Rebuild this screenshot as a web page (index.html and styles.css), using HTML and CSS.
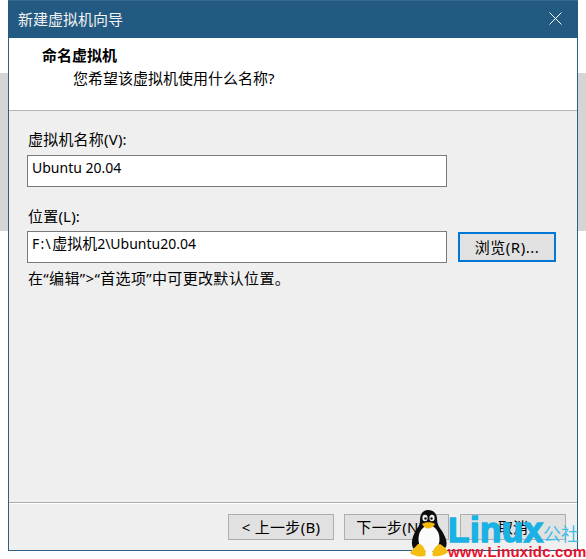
FILE: index.html
```html
<!DOCTYPE html>
<html lang="zh-CN">
<head>
<meta charset="utf-8">
<title>新建虚拟机向导</title>
<link rel="stylesheet" href="styles.css">
</head>
<body>
<div class="window">
  <div class="titlebar">
    <span class="title">新建虚拟机向导</span>
    <svg class="close" width="13" height="13" viewBox="0 0 13 13"><path d="M0.5 0.5L12.5 12.5M12.5 0.5L0.5 12.5" stroke="#fff" stroke-width="1" fill="none"/></svg>
  </div>
  <div class="header">
    <div class="heading">命名虚拟机</div>
    <div class="subheading">您希望该虚拟机使用什么名称?</div>
  </div>
  <div class="content">
    <label class="label">虚拟机名称(V):</label>
    <div class="input name-input"><span class="lat">Ubuntu 20.04</span></div>
    <label class="label loc-label">位置(L):</label>
    <div class="loc-row">
      <div class="input"><span class="lat drive">F:\</span>虚拟机<span class="lat">2\Ubuntu20.04</span></div>
      <button class="btn browse">浏览(R)...</button>
    </div>
    <p class="hint">在“编辑”&gt;“首选项”中可更改默认位置。</p>
  </div>
  <div class="footer">
    <button class="btn back">&lt; 上一步(B)</button>
    <button class="btn next">下一步(N) &gt;</button>
    <button class="btn cancel">取消</button>
  </div>
</div>
<div class="watermark">
  <svg class="tux" width="40" height="47" viewBox="0 0 40 47">
    <path d="M18 0C12 0 10 5 10 11C10 16 7 18 5 22C2 28 1 33 3 38L8 42L30 42L36 37C38 32 35 26 32 21C29 17 27 14 27 9C27 4 24 0 18 0Z" fill="#0c0c0c"/>
    <ellipse cx="19" cy="29" rx="10.500" ry="13.500" fill="#fbfbfb"/>
    <ellipse cx="15" cy="8" rx="2.600" ry="3.200" fill="#eee"/>
    <ellipse cx="22" cy="8" rx="2.600" ry="3.200" fill="#eee"/>
    <circle cx="15.500" cy="8.500" r="1.200" fill="#111"/>
    <circle cx="21.500" cy="8.500" r="1.200" fill="#111"/>
    <path d="M12 14C15 11.500 22 11.500 25 14C23 17.500 20 18.500 18.500 18.500C16 18.500 14 17 12 14Z" fill="#f2b90f"/>
    <path d="M8 34C5 37 1 41 0 43C3 46 10 47 15 46C17 43 14 36 10 34Z" fill="#f5bd12"/>
    <path d="M30 34C33 36 36 38 38 42C35 45 28 47 23 46C21 43 25 35 30 34Z" fill="#f5bd12"/>
  </svg>
  <span class="wm-linux">Linux</span>
  <span class="wm-cn">公社</span>
  <span class="wm-url">www.Linuxidc.com</span>
</div>
</body>
</html>
```
FILE: styles.css
```css
* { box-sizing: border-box; }
html, body { margin: 0; padding: 0; }
body {
  width: 586px;
  height: 559px;
  overflow: hidden;
  position: relative;
  background: linear-gradient(to bottom, #fff 0, #fff 73px, #d5d5d5 73px, #d5d5d5 231px, #fff 231px);
  font-family: "Noto Sans", "Noto Sans CJK SC", sans-serif;
  font-size: 15px;
  color: #000;
}
.lat { font-size: 14px; }
.drive { letter-spacing: 1.3px; }
.window {
  margin-left: 8px;
  width: 570px;
  height: 551px;
  border: 1px solid #2b6088;
  border-top: 0;
  background: #efefef;
  display: flex;
  flex-direction: column;
}
.titlebar {
  height: 38px;
  margin: 0 -1px;
  background: #235a82;
  border-top: 1px solid #38698e;
  display: flex;
  align-items: center;
  justify-content: space-between;
  padding: 0 16px 1px 10px;
  color: #f2f2f2;
}
.title { line-height: 20px; }
.close { display: block; margin-bottom: 1px; }
.header {
  height: 73px;
  background: #fff;
  border-bottom: 1px solid #b4b4ba;
  padding: 6px 0 0 33px;
  line-height: 22px;
}
.heading { font-weight: 700; }
.subheading { margin: 1px 0 0 31px; }
.content {
  flex: 1;
  padding: 18px 0 0 18px;
  display: flex;
  flex-direction: column;
  align-items: flex-start;
}
.label { line-height: 20px; height: 26px; padding-left: 1px; letter-spacing: 0.2px; }
.input {
  width: 420px;
  height: 32px;
  background: #fff;
  border: 1px solid #7a7a7a;
  padding: 0 4px;
  line-height: 22px;
}
.loc-label { margin-top: 18px; padding-top: 1px; }
.loc-row { display: flex; align-items: center; gap: 11px; }
.btn {
  font: inherit;
  color: inherit;
  background: #e1e1e1;
  border: 1px solid #adadad;
  padding: 0;
  line-height: 20px;
}
.browse { width: 98px; height: 30px; border: 2px solid #0078d7; letter-spacing: 0.5px; }
.hint { margin: 4px 0 0 1px; line-height: 22px; letter-spacing: 0.35px; }
.footer {
  height: 48px;
  border-top: 1px solid #ababab;
  box-shadow: inset 0 1px 0 #fff;
  padding: 11px 11px 0 0;
  display: flex;
  justify-content: flex-end;
  align-items: flex-start;
}
.back { width: 106px; height: 26px; letter-spacing: 0.3px; }
.next { width: 105px; height: 26px; margin-left: 10px; letter-spacing: 0.3px; }
.cancel { width: 106px; height: 26px; margin-left: 11px; }
.watermark {
  position: absolute;
  left: 410px;
  top: 510px;
  width: 176px;
  height: 49px;
}
.tux { position: absolute; left: 0; top: 0; }
.wm-linux {
  position: absolute;
  left: 38px;
  top: 1px;
  font: 700 35px/38px "Liberation Sans", sans-serif;
  color: #1ab2e4;
  -webkit-text-stroke: 1.5px #1ab2e4;
  letter-spacing: 0.5px;
}
.wm-cn {
  position: absolute;
  left: 133px;
  top: 12px;
  font: 400 18px/22px "Noto Sans CJK SC", sans-serif;
  color: #3fbde6;
}
.wm-url {
  position: absolute;
  left: 38px;
  top: 33px;
  font: 700 15px/17px "Liberation Sans", sans-serif;
  color: #e8112d;
  letter-spacing: 0.2px;
}
```
